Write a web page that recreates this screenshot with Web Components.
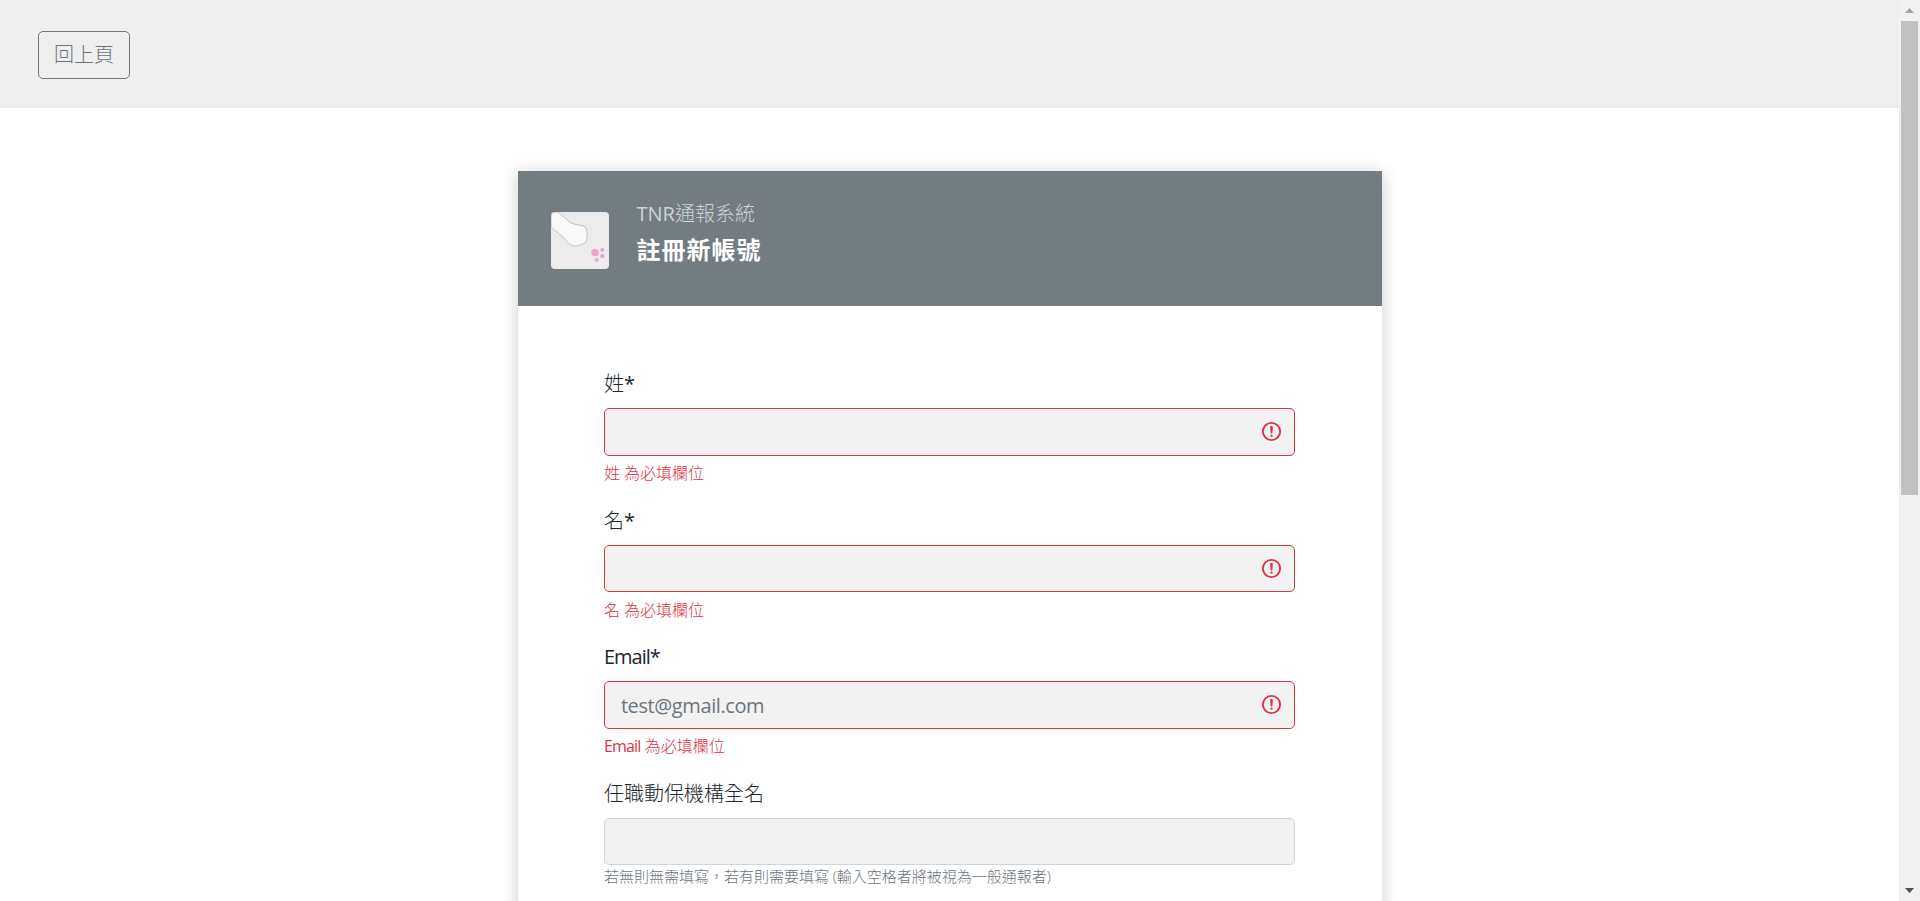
<!DOCTYPE html>
<html lang="zh-Hant">
<head>
<meta charset="utf-8">
<title>註冊新帳號</title>
<style>
html,body{margin:0;height:100%;overflow:hidden;background:#fff}
body{display:flex;font-family:"Open Sans","Noto Sans CJK TC",sans-serif;font-weight:300;color:#212529;font-size:20px}
</style>
</head>
<body>
<tnr-app>
  <tnr-topbar><tnr-back-button>回上頁</tnr-back-button></tnr-topbar>
  <tnr-card system="TNR通報系統" heading="註冊新帳號">
    <tnr-field label="姓*" error="姓 為必填欄位"></tnr-field>
    <tnr-field label="名*" error="名 為必填欄位"></tnr-field>
    <tnr-field label="Email*" error="Email 為必填欄位" placeholder="test@gmail.com"></tnr-field>
    <tnr-field label="任職動保機構全名" hint="若無則無需填寫，若有則需要填寫 (輸入空格者將被視為一般通報者)"></tnr-field>
  </tnr-card>
</tnr-app>
<tnr-scrollbar></tnr-scrollbar>
<script>
const shadow=(el,html)=>{el.attachShadow({mode:'open'}).innerHTML=html};
// Latin runs are regular weight and slightly tightened to take the reference's widths
const fill=(node,text,track='-.05em')=>{node.textContent='';text.split(/([A-Za-z@.*]+)/).forEach((p,i)=>{if(!p)return;if(i%2){const s=document.createElement('span');s.style.letterSpacing=track;s.style.fontWeight='400';s.textContent=p;node.append(s)}else node.append(p)})};
customElements.define('tnr-app',class extends HTMLElement{constructor(){super();shadow(this,`<style>:host{display:block;flex:1;min-width:0;height:100%;overflow:hidden}</style><slot></slot>`)}});
customElements.define('tnr-topbar',class extends HTMLElement{constructor(){super();shadow(this,`<style>:host{display:flex;background:#efefef;padding:31px 38px 29px}</style><slot></slot>`)}});
customElements.define('tnr-back-button',class extends HTMLElement{constructor(){super();shadow(this,`<style>:host{display:block}
button{font:inherit;font-size:20px;line-height:30px;color:#6c757d;background:transparent;border:1px solid #6c757d;border-radius:5px;padding:8px 15px;margin:0;cursor:pointer;display:block}</style><button><slot></slot></button>`)}});
customElements.define('tnr-card',class extends HTMLElement{constructor(){super();shadow(this,`<style>
:host{display:block;width:864px;margin:63px auto 48px;background:#fff;box-shadow:0 2px 16px rgba(0,0,0,.2)}
header{display:flex;align-items:center;gap:28px;height:135px;background:#737c80;padding:0 0 0 33px;box-sizing:border-box}
svg{display:block;margin-top:4px}
.sys{font-size:20px;line-height:30px;color:#ced4da}
.ttl{font-size:24px;line-height:36px;font-weight:700;color:#fff;letter-spacing:1px;margin-top:3px}
.txt{margin-top:-10px}
.form{padding:64px 86.4px 48px}
</style>
<header>
<svg width="58" height="57" viewBox="0 0 58 57"><rect width="58" height="57" rx="4" fill="#ececec"/>
<path d="M7 0 L20 11 C26 14 30 12 34 15 C37 18 37 27 34 31 C30 33 25 35 21 33.5 C17 32 15 28 12 25 L0 15 V4 A4 4 0 0 1 4 0Z" fill="#f9f9f9" stroke="#b4b4b4" stroke-width=".8"/>
<circle cx="44" cy="40.7" r="3.7" fill="#eba6c8"/><circle cx="51.3" cy="38" r="2" fill="#eba6c8"/><circle cx="51.3" cy="44" r="2.2" fill="#eba6c8"/><circle cx="45.7" cy="48" r="2.1" fill="#eba6c8"/></svg>
<div class="txt"><div class="sys"></div><div class="ttl"></div></div>
</header><div class="form"><slot></slot></div>`);
fill(this.shadowRoot.querySelector('.sys'),this.getAttribute('system'),'0');
this.shadowRoot.querySelector('.ttl').textContent=this.getAttribute('heading');}});
customElements.define('tnr-field',class extends HTMLElement{constructor(){super();
const err=this.getAttribute('error'),hint=this.getAttribute('hint');
shadow(this,`<style>
:host{display:block;margin-bottom:21.5px}
label{display:block;font-size:20px;line-height:28px;margin-bottom:10px;color:#212529}
.w{position:relative}
input{display:block;box-sizing:border-box;width:100%;height:47.6px;font:inherit;font-weight:400;font-size:20px;line-height:30px;background:#f2f2f2;border:1px solid #ced4da;border-radius:5px;padding:10px 16px 8px;margin:0;outline:0;color:#212529;letter-spacing:-.4px}
input::placeholder{color:#6c757d;opacity:1}
:host([error]) input{border-color:#dc3545}
svg{position:absolute;right:12px;top:12.3px;display:block}
.e{font-size:16px;line-height:24px;margin-top:5.5px;color:#dc3545}
.h{font-size:15px;line-height:22.5px;color:#6c757d}
</style><label></label><div class="w"><input type="text">${err?`<svg width="23" height="23" viewBox="0 0 12 12" fill="none" stroke="#dc3545"><circle cx="6" cy="6" r="4.5"/><path stroke-linejoin="round" d="M5.8 3.6h.4L6 6.5z"/><circle cx="6" cy="8.2" r=".6" fill="#dc3545" stroke="none"/></svg>`:''}</div>${err?'<div class="e"></div>':''}${hint?'<div class="h"></div>':''}`);
const s=this.shadowRoot;fill(s.querySelector('label'),this.getAttribute('label'));
if(this.hasAttribute('placeholder'))s.querySelector('input').placeholder=this.getAttribute('placeholder');
if(err)fill(s.querySelector('.e'),err);if(hint)s.querySelector('.h').textContent=hint;}});
customElements.define('tnr-scrollbar',class extends HTMLElement{constructor(){super();shadow(this,`<style>
:host{display:flex;flex-direction:column;flex:none;width:21px;height:100%;background:#f1f1f1;box-sizing:border-box;padding:0 2px}
.b{height:21px;flex:none;display:flex;align-items:center;justify-content:center}
.t{height:474px;background:#c1c1c1;flex:none}
.f{flex:1}
</style><div class="b"><svg width="9" height="5" viewBox="0 0 9 5"><path d="M4.5 0L9 5H0z" fill="#a3a3a3"/></svg></div><div class="t"></div><div class="f"></div><div class="b"><svg width="9" height="5" viewBox="0 0 9 5"><path d="M0 0H9L4.5 5z" fill="#505050"/></svg></div>`)}});
</script>
</body>
</html>
